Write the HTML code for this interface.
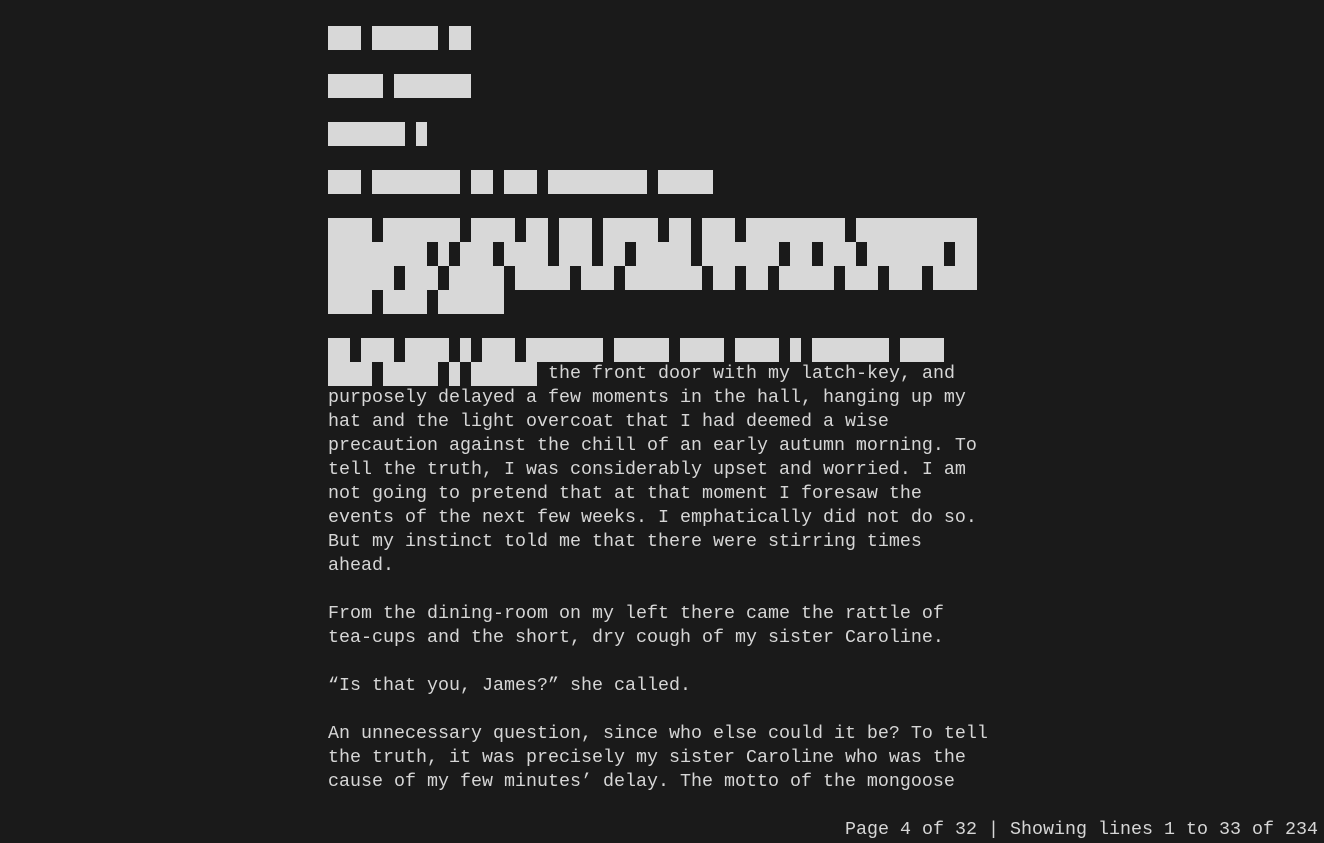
<!DOCTYPE html>
<html><head><meta charset="utf-8"><style>
html,body{margin:0;padding:0;background:#1a1a1a;width:1324px;height:843px;overflow:hidden;position:relative}
.b{position:absolute;background:#d8d8d8;height:24px}
.t{position:absolute;left:328px;height:24px;line-height:24px;font-family:"Liberation Mono",monospace;font-size:18.33px;color:#d6d6d6;white-space:pre}
</style></head><body>
<div id="blocks"></div>
<div class="t" style="top:362px;left:548px">the front door with my latch-key, and</div>
<div class="t" style="top:386px">purposely delayed a few moments in the hall, hanging up my</div>
<div class="t" style="top:410px">hat and the light overcoat that I had deemed a wise</div>
<div class="t" style="top:434px">precaution against the chill of an early autumn morning. To</div>
<div class="t" style="top:458px">tell the truth, I was considerably upset and worried. I am</div>
<div class="t" style="top:482px">not going to pretend that at that moment I foresaw the</div>
<div class="t" style="top:506px">events of the next few weeks. I emphatically did not do so.</div>
<div class="t" style="top:530px">But my instinct told me that there were stirring times</div>
<div class="t" style="top:554px">ahead.</div>
<div class="t" style="top:602px">From the dining-room on my left there came the rattle of</div>
<div class="t" style="top:626px">tea-cups and the short, dry cough of my sister Caroline.</div>
<div class="t" style="top:674px">“Is that you, James?” she called.</div>
<div class="t" style="top:722px">An unnecessary question, since who else could it be? To tell</div>
<div class="t" style="top:746px">the truth, it was precisely my sister Caroline who was the</div>
<div class="t" style="top:770px">cause of my few minutes’ delay. The motto of the mongoose</div>
<div class="t" style="top:818px;left:845px">Page 4 of 32 | Showing lines 1 to 33 of 234</div>
<script>
var rows={26:[[0,3],[4,6],[11,2]],74:[[0,5],[6,7]],122:[[0,7],[8,1]],170:[[0,3],[4,8],[13,2],[16,3],[20,9],[30,5]],
218:[[0,4],[5,7],[13,4],[18,2],[21,3],[25,5],[31,2],[34,3],[38,9],[48,11]],
242:[[0,9],[10,1],[12,3],[16,4],[21,3],[25,2],[28,5],[34,7],[42,2],[45,3],[49,7],[57,2]],
266:[[0,6],[7,3],[11,5],[17,5],[23,3],[27,7],[35,2],[38,2],[41,5],[47,3],[51,3],[55,4]],
290:[[0,4],[5,4],[10,6]],
338:[[0,2],[3,3],[7,4],[12,1],[14,3],[18,7],[26,5],[32,4],[37,4],[42,1],[44,7],[52,4]],
362:[[0,4],[5,5],[11,1],[13,6]]};
var h='';for(var y in rows){rows[y].forEach(function(r){h+='<div class="b" style="top:'+y+'px;left:'+(328+r[0]*11)+'px;width:'+(r[1]*11)+'px"></div>';});}
document.getElementById('blocks').innerHTML=h;
</script>
</body></html>
